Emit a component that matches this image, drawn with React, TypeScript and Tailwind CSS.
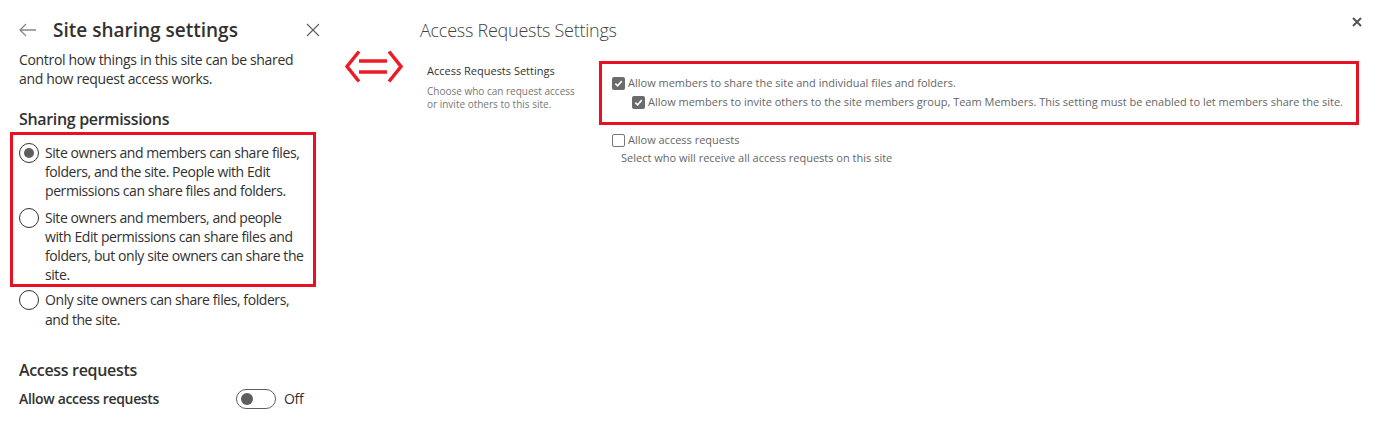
import React from 'react';

const Radio = ({ checked }: { checked?: boolean }) => (
  <span className="flex h-5 w-5 shrink-0 items-center justify-center rounded-full border border-[#323130]">
    {checked && <span className="h-[10px] w-[10px] rounded-full bg-[#605e5c]" />}
  </span>
);

const Check = ({ checked }: { checked?: boolean }) =>
  checked ? (
    <span className="flex h-[13px] w-[13px] shrink-0 items-center justify-center rounded-[2px] bg-[#6b6b6b]">
      <svg width="9" height="9" viewBox="0 0 10 10">
        <path d="M1.5 5.2 L4 7.6 L8.6 2.4" fill="none" stroke="#fff" strokeWidth="1.8" />
      </svg>
    </span>
  ) : (
    <span className="h-[13px] w-[13px] shrink-0 rounded-[2px] border border-[#777] bg-white" />
  );

const options = [
  'Site owners and members can share files, folders, and the site. People with Edit permissions can share files and folders.',
  'Site owners and members, and people with Edit permissions can share files and folders, but only site owners can share the site.',
  'Only site owners can share files, folders, and the site.',
];

export default function App() {
  return (
    <div className="flex h-[428px] w-[1383px] bg-white text-[#323130]" style={{ fontFamily: '"Open Sans", sans-serif' }}>
      {/* Site sharing panel */}
      <div className="w-[340px] shrink-0 pl-[10px] pt-[18px] tracking-[-0.33px]">
        <div className="flex h-[24px] items-center pl-[9px] pr-[20px]">
          <svg width="18" height="14" viewBox="0 0 18 14" className="shrink-0">
            <path d="M7 1 L1 7 L7 13 M1 7 H17" fill="none" stroke="#8a8886" strokeWidth="1.3" />
          </svg>
          <h1 className="ml-[16px] text-[19px] font-semibold leading-6 tracking-normal">Site sharing settings</h1>
          <svg width="14" height="14" viewBox="0 0 14 14" className="ml-auto">
            <path d="M1 1 L13 13 M13 1 L1 13" fill="none" stroke="#605e5c" strokeWidth="1.1" />
          </svg>
        </div>
        <p className="mt-[8px] w-[290px] pl-[9px] text-[14px] leading-[19px]">
          Control how things in this site can be shared and how request access works.
        </p>
        <h2 className="mt-[20px] pl-[9px] text-[16px] font-semibold leading-[22px]">Sharing permissions</h2>
        <div className="mt-[2px] w-[306px] border-[3px] border-[#e81123] pl-[6px] pr-[3px] pt-[8px] tracking-[-0.42px]">
          {options.slice(0, 2).map((o, i) => (
            <div key={i} className="mb-[8px] flex gap-[6px] last:mb-0">
              <Radio checked={i === 0} />
              <span className="w-[265px] text-[14px] leading-[19px]">{o}</span>
            </div>
          ))}
        </div>
        <div className="mt-[3px] flex gap-[6px] pl-[9px] tracking-[-0.42px]">
          <Radio />
          <span className="w-[262px] text-[14px] leading-[20px]">{options[2]}</span>
        </div>
        <h2 className="mt-[29px] pl-[9px] text-[16px] font-semibold leading-[22px]">Access requests</h2>
        <div className="mt-[8px] flex items-center pl-[9px]">
          <span className="w-[217px] text-[14px] font-semibold leading-5">Allow access requests</span>
          <span className="flex h-5 w-10 items-center rounded-full border border-[#605e5c] px-[4px]">
            <span className="h-3 w-3 rounded-full bg-[#605e5c]" />
          </span>
          <span className="ml-[8px] text-[14px] leading-5">Off</span>
        </div>
      </div>

      {/* Arrow annotation */}
      <div className="w-[80px] shrink-0 pl-[5px] pt-[50px]">
        <svg width="60" height="33" viewBox="0 0 60 33">
          <path d="M14 1.5 L2 16.5 L14 31.5 M44 1.5 L56 16.5 L44 31.5" fill="none" stroke="#ed1c24" strokeWidth="3.5" />
          <path d="M14 11 H42 M14 22 H42" stroke="#ed1c24" strokeWidth="3.5" />
        </svg>
      </div>

      {/* Classic access request settings */}
      <div className="relative flex-1 pt-[17px]">
        <h1 className="text-[18px] font-light leading-[26px] tracking-[-0.25px] text-[#444]">Access Requests Settings</h1>
        <div className="mt-[18px] flex">
          <div className="w-[179px] shrink-0 pl-[7px] pt-[2px]">
            <div className="text-[11px] leading-4 text-[#333]">Access Requests Settings</div>
            <div className="mt-[6px] w-[155px] text-[10px] leading-[13px] text-[#777]">
              Choose who can request access or invite others to this site.
            </div>
          </div>
          <div className="text-[11px] leading-[16px] text-[#666]">
            <div className="w-[760px] border-[3px] border-[#e81123] pb-[12px] pl-[10px] pt-[11px]">
              <label className="flex items-center gap-[3px]">
                <Check checked />
                <span>Allow members to share the site and individual files and folders.</span>
              </label>
              <label className="mt-[3px] flex items-center gap-[3px] pl-[20px]">
                <Check checked />
                <span>Allow members to invite others to the site members group, Team Members. This setting must be enabled to let members share the site.</span>
              </label>
            </div>
            <label className="mt-[7px] flex items-center gap-[3px] pl-[13px]">
              <Check />
              <span>Allow access requests</span>
            </label>
            <div className="mt-[2px] pl-[22px]">Select who will receive all access requests on this site</div>
          </div>
        </div>
        <svg width="10" height="10" viewBox="0 0 10 10" className="absolute right-[21px] top-[17px]">
          <path d="M1 1 L9 9 M9 1 L1 9" stroke="#555" strokeWidth="2" />
        </svg>
      </div>
    </div>
  );
}
